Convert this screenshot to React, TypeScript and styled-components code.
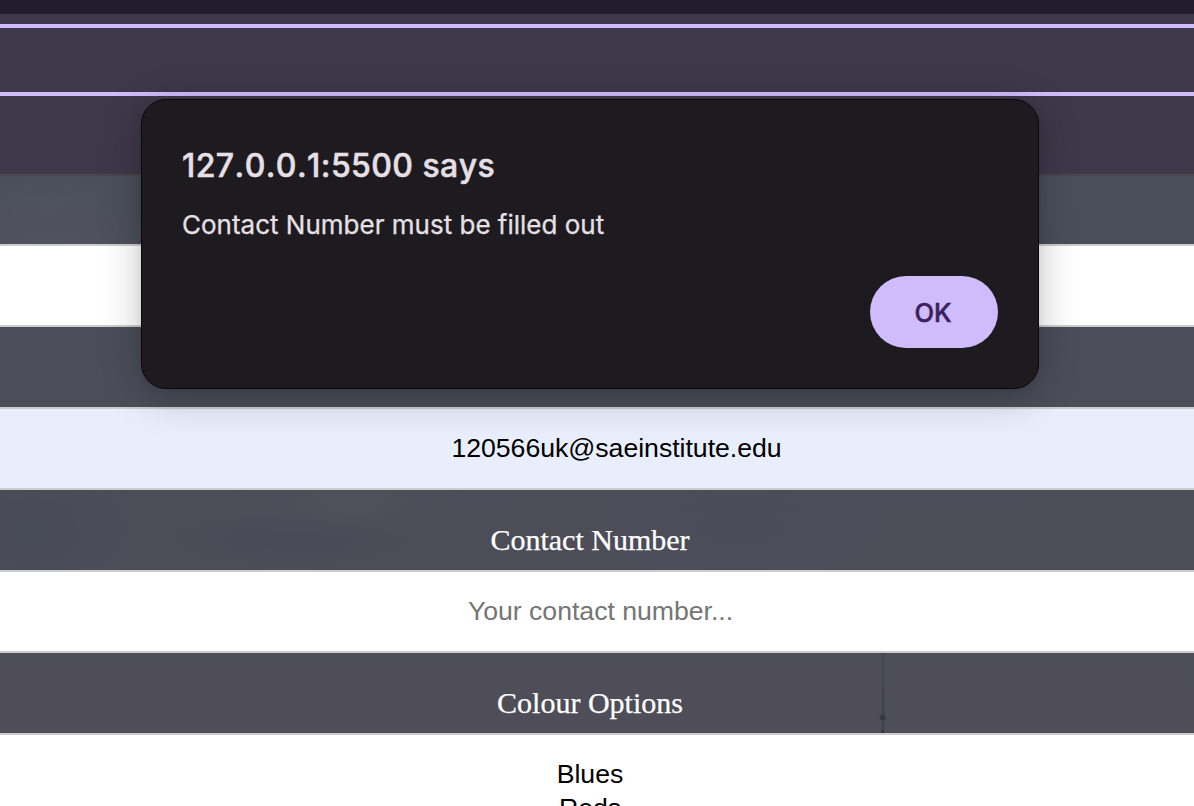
import React from 'react';
import styled, { createGlobalStyle } from 'styled-components';

const GlobalStyle = createGlobalStyle`
  * { box-sizing: border-box; }
  html, body { margin: 0; height: 100%; overflow: hidden; }
  body { background: #4c4e59; }
`;

const Page = styled.div`
  position: relative;
  height: 806px;
  overflow: hidden;
  display: flex;
  flex-direction: column;
`;

const TopBar = styled.div`
  height: 14px;
  flex: none;
  background: #231c2e;
`;

const Header = styled.header`
  flex: none;
  height: 162px;
  padding-top: 10px;
  background: #3e384a;
  border-bottom: 2px solid #4a464b;
`;

const NavBand = styled.div`
  height: 72px;
  border-top: 4px solid #d1bcfd;
  border-bottom: 4px solid #d1bcfd;
`;

const Form = styled.form`
  flex: none;
  height: 630px;
  overflow: hidden;
  display: flex;
  flex-direction: column;
  background:
    radial-gradient(ellipse 90px 40px at 50px 35px, rgba(82, 84, 97, 0.7), transparent),
    radial-gradient(ellipse 130px 45px at 50px 75px, rgba(83, 83, 95, 0.9), transparent),
    radial-gradient(ellipse 110px 80px at 30px 355px, rgba(69, 74, 87, 0.8), transparent),
    radial-gradient(ellipse 130px 30px at 290px 365px, rgba(73, 73, 86, 0.8), transparent),
    radial-gradient(ellipse 120px 40px at 350px 325px, rgba(81, 82, 92, 0.6), transparent),
    radial-gradient(ellipse 160px 70px at 740px 350px, rgba(73, 77, 89, 0.8), transparent),
    linear-gradient(#4a4f5b 0, #4b4d59 200px, #4d4d58 360px, #4f4e58 560px);
`;

const Label = styled.label<{ $height?: number }>`
  flex: none;
  height: ${(p) => p.$height ?? 80}px;
  width: 1180px;
  padding-top: 33px;
  position: relative;
  font: 30px/34px 'Liberation Serif', serif;
  -webkit-text-stroke: 0.25px #fff;
  color: #fff;
  text-align: center;
`;

const Field = styled.input<{ $fill?: string; $indent?: number }>`
  flex: none;
  display: block;
  width: 100%;
  height: 83px;
  margin: 0;
  padding: 0 0 1px ${(p) => p.$indent ?? 0}px;
  border: solid #ccc;
  border-width: 2px 0;
  border-radius: 0;
  outline: 0;
  background: ${(p) => p.$fill ?? '#fff'};
  color: #000;
  font: 26.67px 'Liberation Sans', Arial, sans-serif;
  letter-spacing: -0.03px;
  text-align: center;
  &::placeholder { color: #757575; opacity: 1; }
`;

const Options = styled.div`
  flex: none;
  height: 120px;
  padding: 22px 14px 0 0;
  border-top: 2px solid #ccc;
  background: #fff;
  color: #000;
  font: 26.67px/34px 'Liberation Sans', Arial, sans-serif;
  text-align: center;
`;

const Mast = styled.svg`
  position: absolute;
  left: 874px;
  top: 0;
`;

const Dialog = styled.section`
  position: absolute;
  left: 141px;
  top: 99px;
  width: 898px;
  height: 290px;
  padding: 46px 40px 40px;
  display: flex;
  flex-direction: column;
  border: 1px solid #09080b;
  border-radius: 25px;
  background: #1e1b20;
  box-shadow: 0 8px 40px rgba(0, 0, 0, 0.24), 0 2px 8px rgba(0, 0, 0, 0.08);
  color: #e6e0e6;
  font-family: Inter, sans-serif;
`;

const Title = styled.h1`
  margin: 0;
  font-size: 32px;
  line-height: 40px;
  font-weight: 500;
  font-kerning: none;
  font-feature-settings: 'calt' 0;
  letter-spacing: 0.42px;
  -webkit-text-stroke: 0.5px #e6e0e6;
  white-space: nowrap;
`;

const Message = styled.p`
  margin: 19px 0 0;
  font-size: 26px;
  line-height: 40px;
  -webkit-text-stroke: 0.25px #e6e0e6;
  white-space: nowrap;
`;

const OkButton = styled.button`
  align-self: flex-end;
  margin-top: auto;
  width: 128px;
  height: 72px;
  padding: 1px 2px 0 0;
  border: 0;
  border-radius: 36px;
  background: #d0bcfb;
  color: #38225f;
  font: 500 25.5px/30px Inter, sans-serif;
  -webkit-text-stroke: 0.5px #38225f;
`;

export default function App() {
  return (
    <Page>
      <GlobalStyle />
      <TopBar />
      <Header>
        <NavBand />
      </Header>
      <Form>
        <Label $height={68} />
        <Field />
        <Label />
        <Field $fill="#e8eefc" $indent={39} defaultValue="120566uk@saeinstitute.edu" />
        <Label>Contact Number</Label>
        <Field $indent={7} placeholder="Your contact number..." />
        <Label>
          Colour Options
          <Mast width="18" height="80" viewBox="0 0 18 80">
            <path d="M9 0V80" stroke="#464651" strokeWidth="3" opacity="0.75" />
            <path d="M9 35V80" stroke="#41414c" strokeWidth="2.5" opacity="0.7" />
            <ellipse cx="8.7" cy="64.5" rx="3" ry="2.5" fill="#363642" />
            <path d="M8.7 77V80" stroke="#383844" strokeWidth="3" />
          </Mast>
        </Label>
        <Options>
          <div>Blues</div>
          <div>Reds</div>
        </Options>
      </Form>
      <Dialog role="alertdialog">
        <Title>127.0.0.1:5500 says</Title>
        <Message>Contact Number must be filled out</Message>
        <OkButton type="button">OK</OkButton>
      </Dialog>
    </Page>
  );
}
